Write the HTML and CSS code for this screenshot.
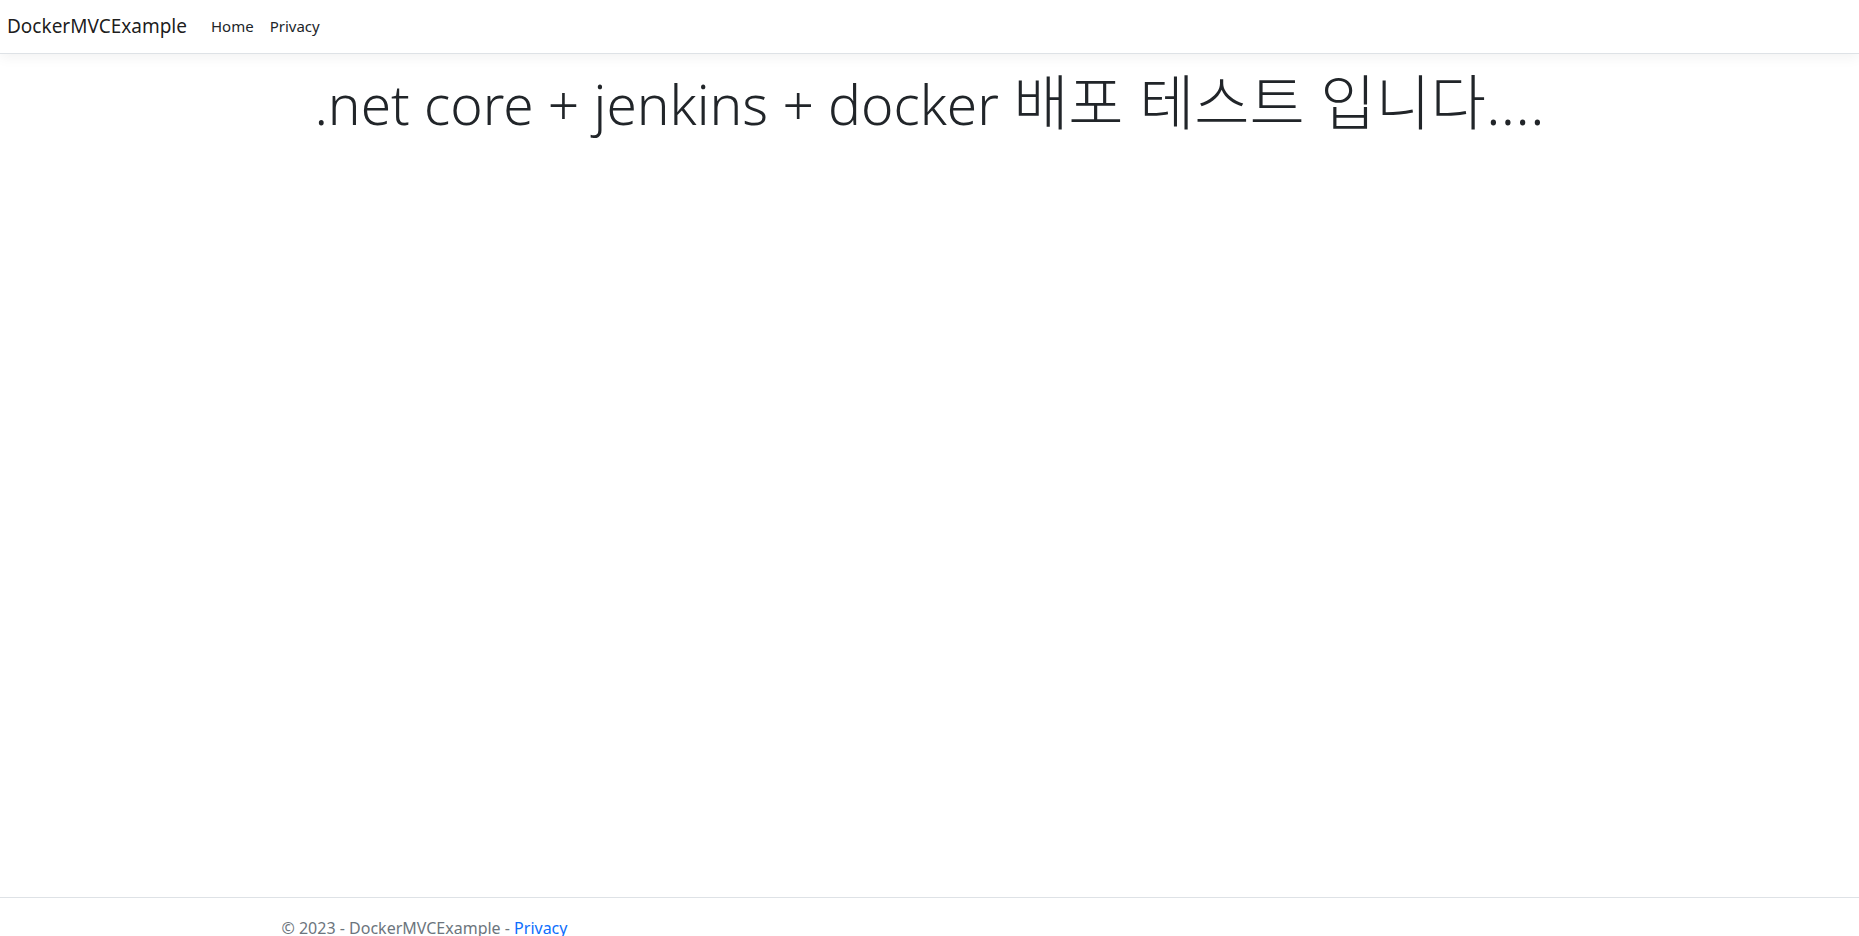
FILE: index.html
```html
<!DOCTYPE html>
<html lang="ko">
<head>
	<meta charset="utf-8">
	<meta name="viewport" content="width=device-width, initial-scale=1.0">
	<title>Home Page - DockerMVCExample</title>
	<link rel="stylesheet" href="styles.css">
</head>
<body>
<div class="page">
	<header>
		<nav class="navbar">
			<a class="navbar-brand" href="#">DockerMVCExample</a>
			<ul class="navbar-nav">
				<li><a class="nav-link" href="#">Home</a></li>
				<li><a class="nav-link" href="#">Privacy</a></li>
			</ul>
		</nav>
	</header>
	<div class="container main">
		<div class="text-center">
			<h1 class="display-4">.net core + jenkins + docker <span class="ko">배포 테스트 입니다....</span></h1>
		</div>
	</div>
	<footer class="footer">
		<div class="container">
			&copy; 2023 - DockerMVCExample - <a href="#">Privacy</a>
		</div>
	</footer>
</div>
</body>
</html>
```

FILE: styles.css
```css
html, body {
	margin: 0;
	padding: 0;
}
body {
	font-family: "Noto Sans", "Noto Sans CJK KR", sans-serif;
	font-size: 16px;
	line-height: 1.5;
	color: #212529;
	background: #fff;
}
a {
	text-decoration: none;
}
.page {
	display: flex;
	flex-direction: column;
	min-height: 958px;
}
.navbar {
	display: flex;
	align-items: center;
	height: 53px;
	padding: 0 7px;
	background: #fff;
	border-bottom: 1px solid #dee2e6;
	box-shadow: 0 4px 12px rgba(0, 0, 0, .05);
}
.navbar-brand {
	font-size: 19px;
	color: rgba(0, 0, 0, .9);
	margin-right: 16px;
}
.navbar-nav {
	display: flex;
	list-style: none;
	margin: 0;
	padding: 0;
}
.nav-link {
	display: block;
	padding: 8px 8px;
	font-size: 15px;
	color: #212529;
}
.container {
	max-width: 1320px;
	margin: 0 auto;
	padding: 0 12px;
	width: 100%;
	box-sizing: border-box;
}
.main {
	flex: 1;
	padding-top: 16px;
}
.text-center {
	text-align: center;
}
.display-4 {
	margin: 0;
	font-size: 55px;
	font-weight: 300;
	line-height: 67px;
}
.display-4 .ko {
	font-size: 60px;
	line-height: 1;
}
.footer {
	border-top: 1px solid #dee2e6;
	line-height: 60px;
	white-space: nowrap;
	color: #6c757d;
}
.footer a {
	color: #0d6efd;
}
```
